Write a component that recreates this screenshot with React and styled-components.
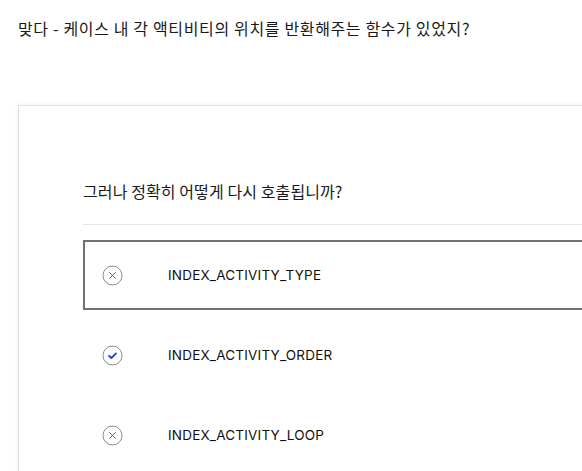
import React from 'react';
import styled, { createGlobalStyle } from 'styled-components';

const GlobalStyle = createGlobalStyle`
  html, body {
    margin: 0;
    padding: 0;
    background: #fff;
    overflow: hidden;
  }
  body {
    font-family: "Noto Sans CJK KR", "Noto Sans", sans-serif;
    color: #1a1a1a;
  }
`;

const Page = styled.div`
  width: 582px;
  height: 471px;
  overflow: hidden;
  padding: 16px 0 0 18px;
  box-sizing: border-box;
`;

const Intro = styled.p`
  margin: 0;
  font-size: 16px;
  line-height: 24px;
  letter-spacing: 0.65px;
`;

const Card = styled.div`
  margin-top: 65px;
  width: 620px;
  border: 1px solid #e2e2e2;
  box-shadow: 0 0 6px rgba(0, 0, 0, 0.05);
  padding: 73px 0 40px 64px;
  box-sizing: border-box;
  background: #fff;
`;

const Question = styled.h3`
  margin: 0;
  font-weight: 400;
  font-size: 16px;
  line-height: 24px;
  letter-spacing: 0.1px;
  padding-bottom: 21px;
  border-bottom: 1px solid #e6e6e6;
`;

const Options = styled.div`
  display: flex;
  flex-direction: column;
  gap: 10px;
  margin-top: 15px;
`;

const Option = styled.div`
  display: flex;
  align-items: center;
  height: 70px;
  box-sizing: border-box;
  border: 2px solid ${p => (p.$selected ? '#717171' : 'transparent')};
  padding-left: 17px;
`;

const IconWrap = styled.span`
  display: flex;
  width: 21px;
  height: 21px;
  margin-right: 45px;
`;

const Label = styled.span`
  font-family: "Inter", "Liberation Sans", sans-serif;
  font-size: 13.5px;
  letter-spacing: 0.2px;
  color: #111;
`;

const CrossIcon = () => (
  <svg width="21" height="21" viewBox="0 0 21 21">
    <circle cx="10.5" cy="10.5" r="9.5" fill="none" stroke="#8a8a8a" strokeWidth="1" />
    <path d="M7.5 7.5 L13.5 13.5 M13.5 7.5 L7.5 13.5" stroke="#666" strokeWidth="1" strokeLinecap="round" />
  </svg>
);

const CheckIcon = () => (
  <svg width="21" height="21" viewBox="0 0 21 21">
    <circle cx="10.5" cy="10.5" r="9.5" fill="none" stroke="#8a8a8a" strokeWidth="1" />
    <path d="M7 10.8 L9.4 13 L14 8.4" fill="none" stroke="#1f3fd6" strokeWidth="1.8" strokeLinecap="round" strokeLinejoin="round" />
  </svg>
);

const options = [
  { label: 'INDEX_ACTIVITY_TYPE', correct: false, selected: true },
  { label: 'INDEX_ACTIVITY_ORDER', correct: true },
  { label: 'INDEX_ACTIVITY_LOOP', correct: false },
];

export default function App() {
  return (
    <>
      <GlobalStyle />
      <Page>
        <Intro>맞다 - 케이스 내 각 액티비티의 위치를 반환해주는 함수가 있었지?</Intro>
        <Card>
          <Question>그러나 정확히 어떻게 다시 호출됩니까?</Question>
          <Options>
            {options.map(o => (
              <Option key={o.label} $selected={o.selected}>
                <IconWrap>{o.correct ? <CheckIcon /> : <CrossIcon />}</IconWrap>
                <Label>{o.label}</Label>
              </Option>
            ))}
          </Options>
        </Card>
      </Page>
    </>
  );
}
